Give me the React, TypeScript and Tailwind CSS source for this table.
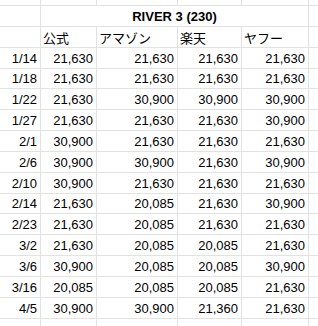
const rows: [string, string, string, string, string][] = [
  ["1/14", "21,630", "21,630", "21,630", "21,630"],
  ["1/18", "21,630", "21,630", "21,630", "21,630"],
  ["1/22", "21,630", "30,900", "30,900", "30,900"],
  ["1/27", "21,630", "21,630", "21,630", "30,900"],
  ["2/1", "30,900", "21,630", "21,630", "21,630"],
  ["2/6", "30,900", "30,900", "21,630", "30,900"],
  ["2/10", "30,900", "21,630", "21,630", "21,630"],
  ["2/14", "21,630", "20,085", "21,630", "30,900"],
  ["2/23", "21,630", "20,085", "21,630", "21,630"],
  ["3/2", "21,630", "20,085", "20,085", "21,630"],
  ["3/6", "30,900", "20,085", "20,085", "30,900"],
  ["3/16", "20,085", "20,085", "20,085", "21,630"],
  ["4/5", "30,900", "30,900", "21,360", "21,630"],
];

// rows 1/18 and 2/14 are a pixel shorter (the capture is slightly scaled)
const shortRows = new Set([1, 7]);

const headers = ["公式", "アマゾン", "楽天", "ヤフー"];

const line = "border-[#e2e2e2]";
const cell = `border-r border-b ${line} flex items-center leading-[15px] overflow-hidden whitespace-nowrap`;

export default function App() {
  return (
    <div
      className="w-[318px] h-[326px] overflow-hidden bg-white text-black text-[13px]"
      style={{ fontFamily: '"Liberation Sans", Arial, "Noto Sans CJK JP", sans-serif' }}
    >
      <div className="grid grid-cols-[41px_56px_81px_64px_67px_1fr]">
        {/* partial row cut at top */}
        {[0, 1, 2, 3, 4].map((i) => (
          <div key={`t${i}`} className={`h-[6px] border-r border-b ${line}`} />
        ))}
        <div className={`h-[6px] border-b ${line}`} />

        {/* title */}
        <div className={`${cell} h-[21px]`} />
        <div className={`${cell} h-[21px] col-span-4 justify-center font-bold`}>RIVER 3 (230)</div>
        <div className={`h-[21px] border-b ${line}`} />

        {/* shop headers */}
        <div className={`${cell} h-[21px]`} />
        {headers.map((h) => (
          <div
            key={h}
            className={`${cell} h-[21px] pl-[2px]`}
            style={{ fontFamily: '"Noto Sans CJK JP", "Liberation Sans", sans-serif' }}
          >
            {h}
          </div>
        ))}
        <div className={`h-[21px] border-b ${line}`} />

        {rows.map((r, ri) => {
          const h = shortRows.has(ri) ? "h-[20px]" : "h-[21px]";
          return (
            <div key={r[0]} className="contents">
              {r.map((v, i) => (
                <div key={i} className={`${cell} ${h} justify-end pr-[3px]`}>
                  {v}
                </div>
              ))}
              <div className={`${h} border-b ${line}`} />
            </div>
          );
        })}

        {/* partial row at bottom */}
        {[0, 1, 2, 3, 4].map((i) => (
          <div key={`b${i}`} className={`h-[10px] border-r ${line}`} />
        ))}
        <div className="h-[10px]" />
      </div>
    </div>
  );
}
